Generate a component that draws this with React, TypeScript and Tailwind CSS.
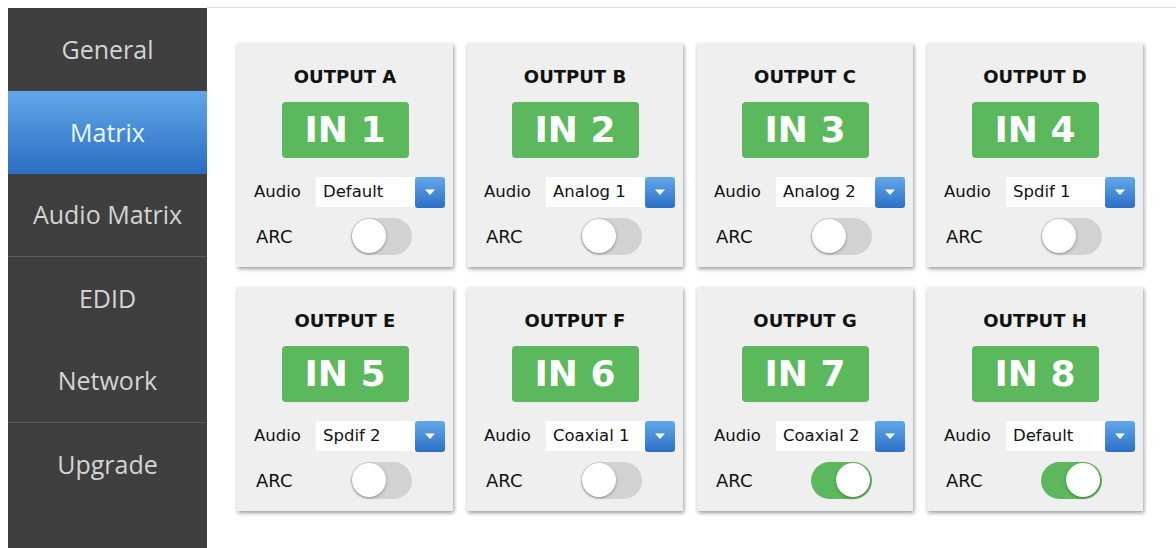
import React from "react";

type Out = { name: string; input: string; audio: string; arc: boolean };

const outputs: Out[] = [
  { name: "OUTPUT A", input: "IN 1", audio: "Default", arc: false },
  { name: "OUTPUT B", input: "IN 2", audio: "Analog 1", arc: false },
  { name: "OUTPUT C", input: "IN 3", audio: "Analog 2", arc: false },
  { name: "OUTPUT D", input: "IN 4", audio: "Spdif 1", arc: false },
  { name: "OUTPUT E", input: "IN 5", audio: "Spdif 2", arc: false },
  { name: "OUTPUT F", input: "IN 6", audio: "Coaxial 1", arc: false },
  { name: "OUTPUT G", input: "IN 7", audio: "Coaxial 2", arc: true },
  { name: "OUTPUT H", input: "IN 8", audio: "Default", arc: true },
];

function Toggle({ on }: { on: boolean }) {
  return (
    <div
      className={
        on
          ? "relative w-[61px] h-[37px] rounded-full bg-[#5cb85c] flex items-center justify-end px-[2px]"
          : "relative w-[61px] h-[37px] rounded-full bg-[#d2d2d2] flex items-center justify-start px-[1px]"
      }
    >
      <div className="w-[34px] h-[34px] rounded-full bg-white shadow-[0_1px_3px_rgba(0,0,0,0.35)]" />
    </div>
  );
}

function Card({ o }: { o: Out }) {
  return (
    <div className="w-[216px] h-[224px] bg-[#efefef] shadow-[1px_2px_4px_rgba(0,0,0,0.4)] flex flex-col items-stretch pt-[22px]">
      <div className="h-[24px] leading-[24px] text-center font-['DejaVu_Sans',sans-serif] font-bold text-[18px] text-[#111]">
        {o.name}
      </div>
      <div className="mt-[13px] self-center w-[127px] h-[56px] rounded-[4px] bg-[#5cb85c] flex items-center justify-center">
        <span className="font-['DejaVu_Sans',sans-serif] font-bold text-[36px] leading-none text-white">
          {o.input}
        </span>
      </div>
      <div className="mt-[19px] h-[30px] flex items-center pl-[17px]">
        <span className="w-[62px] font-['DejaVu_Sans',sans-serif] text-[16.5px] text-[#111]">Audio</span>
        <div className="w-[99px] h-[30px] bg-white flex items-center pl-[7px] font-['DejaVu_Sans',sans-serif] text-[16.5px] text-[#111] whitespace-nowrap overflow-hidden">
          {o.audio}
        </div>
        <div className="w-[30px] h-[31px] rounded-[3px] bg-gradient-to-b from-[#63a8ea] to-[#2b70c6] flex items-center justify-center">
          <svg width="12" height="8" viewBox="0 0 12 8">
            <path d="M1 1.5 L11 1.5 L6 7 Z" fill="#ffffff" />
          </svg>
        </div>
      </div>
      <div className="mt-[10px] h-[38px] flex items-center pl-[19px]">
        <span className="w-[95px] font-['DejaVu_Sans',sans-serif] text-[18px] text-[#111]">ARC</span>
        <Toggle on={o.arc} />
      </div>
    </div>
  );
}

const menu = ["General", "Matrix", "Audio Matrix", "EDID", "Network", "Upgrade"];

export default function App() {
  return (
    <div className="w-[1176px] h-[548px] bg-white overflow-hidden pt-[8px] pl-[8px] flex">
      <div className="w-[199px] h-[540px] bg-[#3f3f3f] flex flex-col font-['Open_Sans',sans-serif]">
        {menu.map((m, i) => {
          const active = m === "Matrix";
          const sepBelow = i === 2 || i === 4;
          return (
            <div
              key={m}
              className={
                active
                  ? "h-[83px] flex items-center justify-center bg-gradient-to-b from-[#62a7e8] to-[#2a6ec4] text-[#eef7ff] text-[25px]"
                  : sepBelow
                  ? "h-[83px] flex items-center justify-center text-[#d4d4d4] text-[25px] border-b border-[#5c5c5c]"
                  : "h-[83px] flex items-center justify-center text-[#d4d4d4] text-[25px]"
              }
            >
              {m}
            </div>
          );
        })}
      </div>
      <div className="flex-1 border-t border-[#dcdcdc] -mt-[1px]">
        <div className="pt-[35px] pl-[30px] grid grid-cols-[repeat(4,216px)] gap-x-[14px] gap-y-[20px]">
          {outputs.map((o) => (
            <Card key={o.name} o={o} />
          ))}
        </div>
      </div>
    </div>
  );
}
